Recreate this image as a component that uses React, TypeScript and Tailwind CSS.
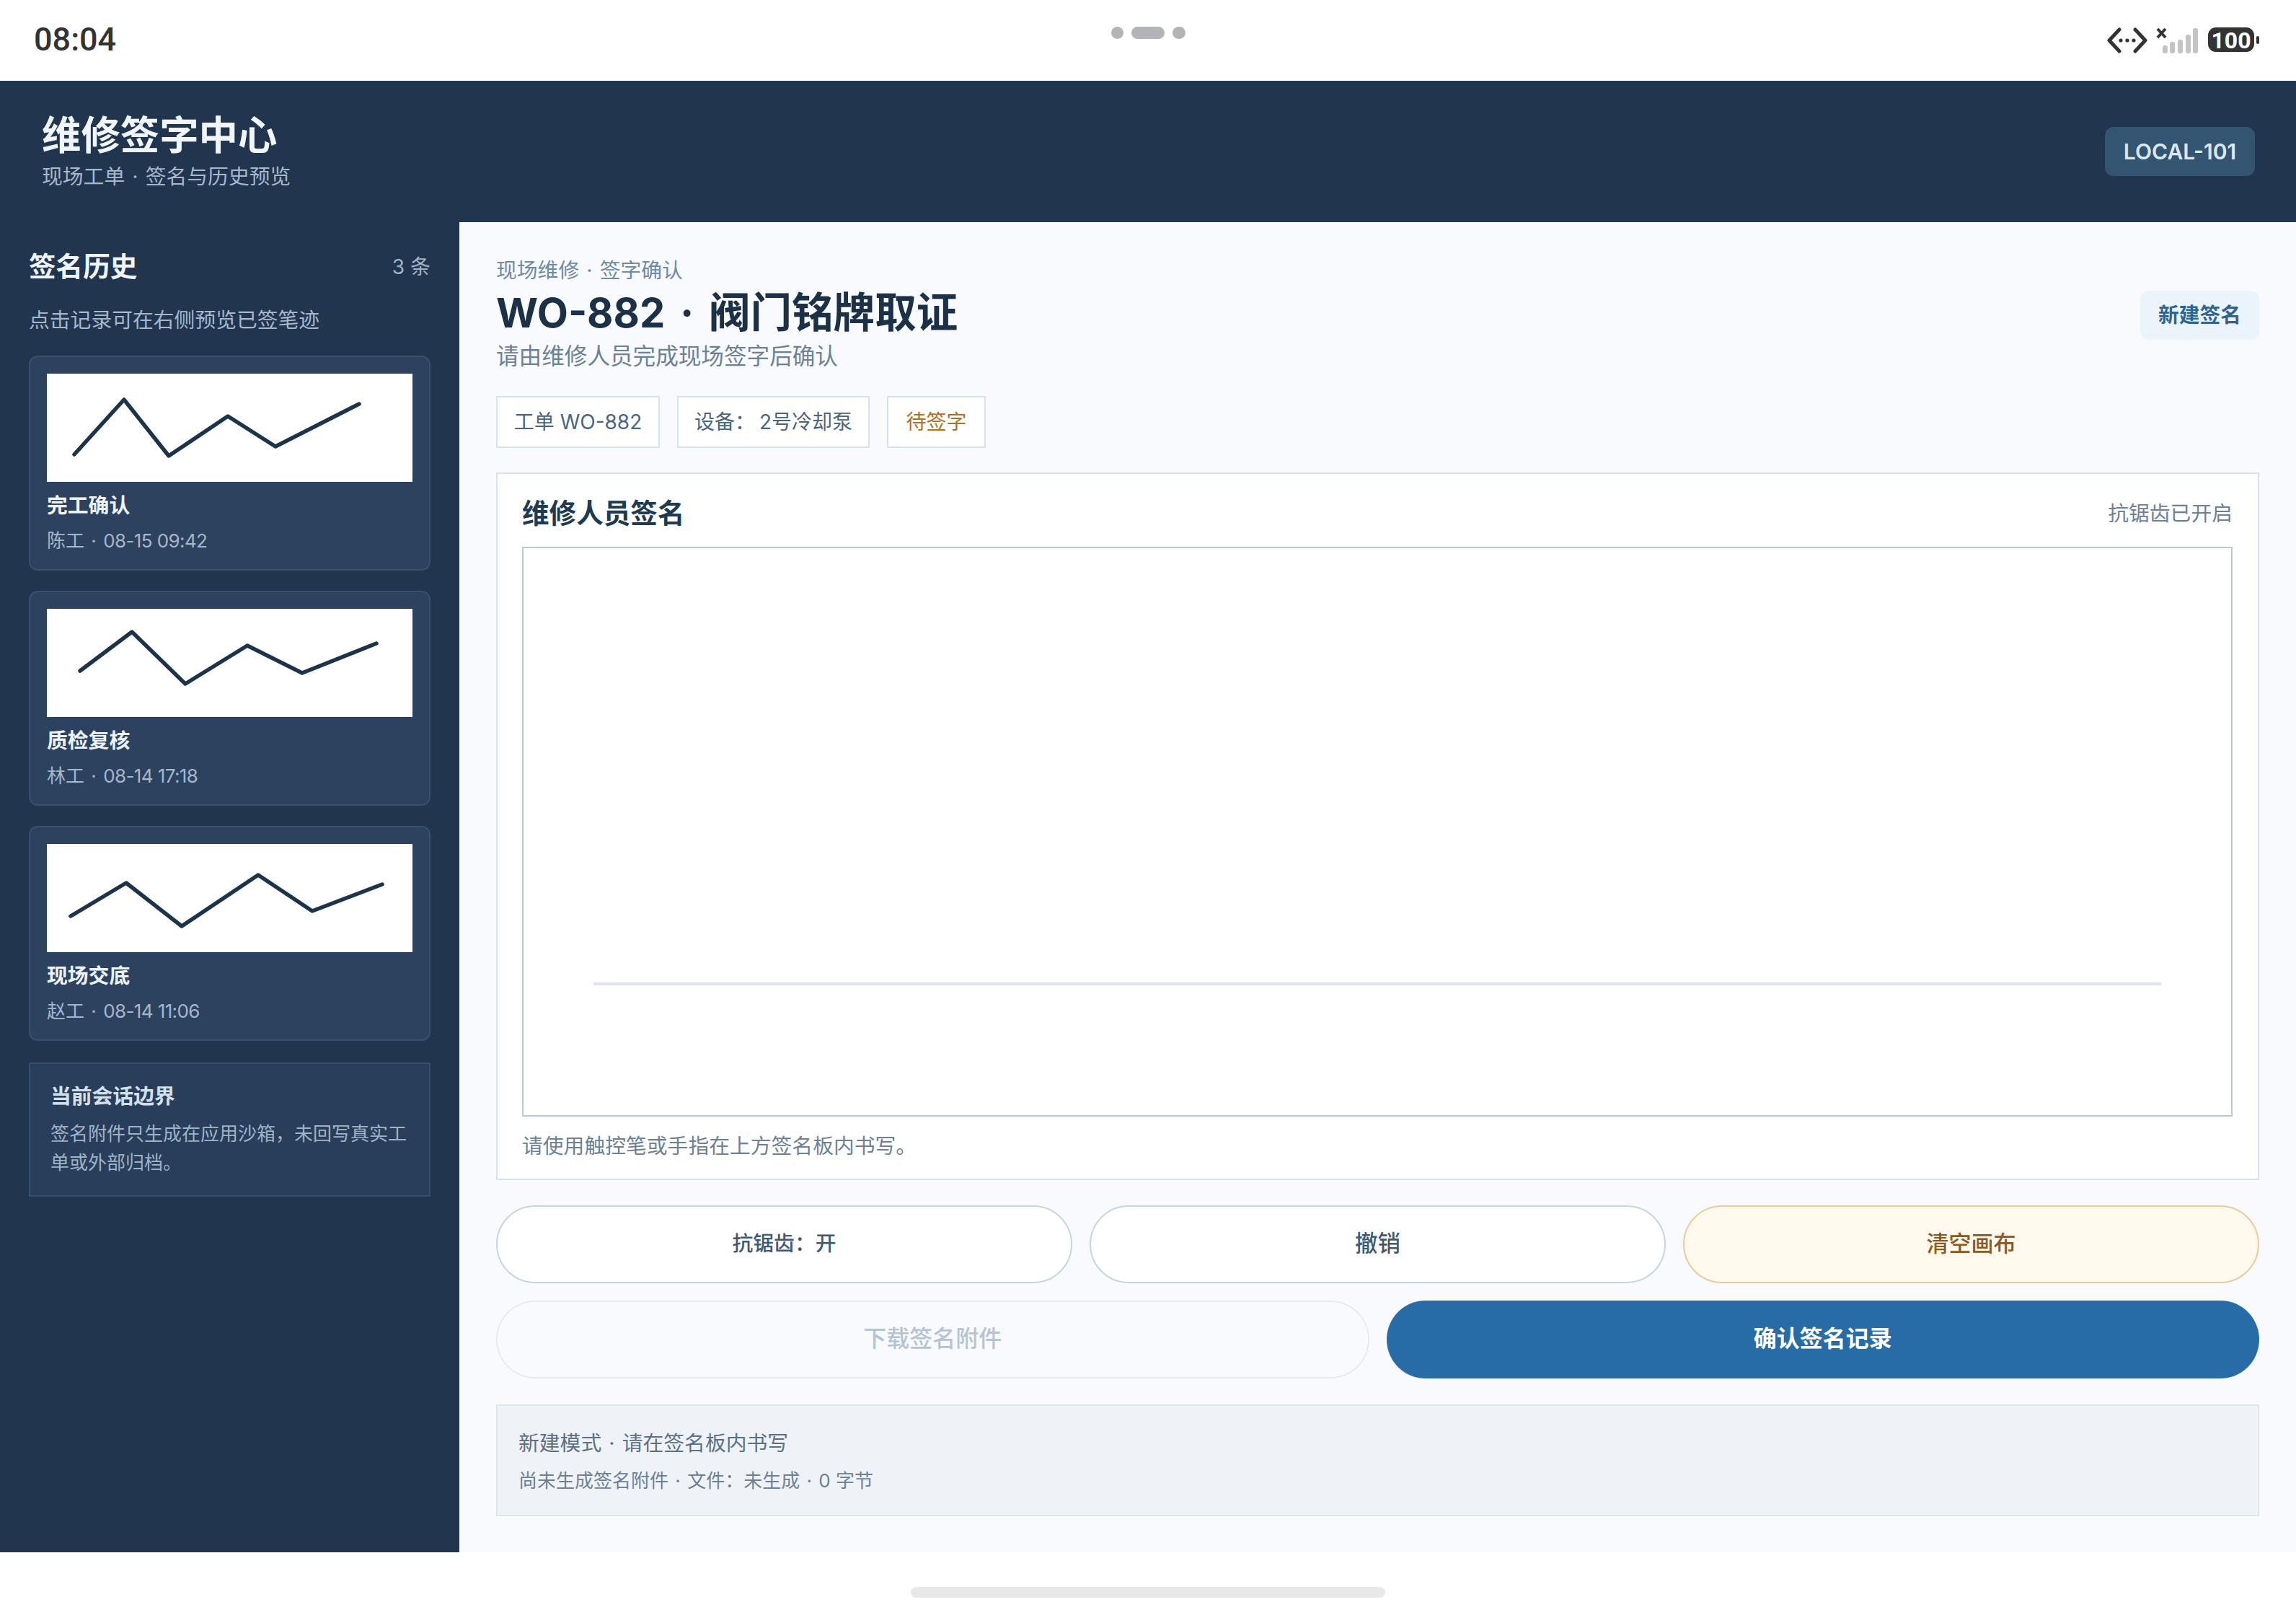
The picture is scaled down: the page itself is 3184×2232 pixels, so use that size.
const fontStack = "font-['Inter','Noto_Sans_CJK_SC',sans-serif]";

const history = [
  {
    id: 1,
    title: "完工确认",
    name: "陈工",
    time: "08-15 09:42",
    points: "38,112 107,36 169,114 251,59 317,101 433,42",
  },
  {
    id: 2,
    title: "质检复核",
    name: "林工",
    time: "08-14 17:18",
    points: "46,86 118,32 192,104 278,51 354,89 457,48",
  },
  {
    id: 3,
    title: "现场交底",
    name: "赵工",
    time: "08-14 11:06",
    points: "33,100 110,54 187,114 293,43 368,93 465,56",
  },
];

function Dot() {
  return <span className="mx-[2px]">·</span>;
}

function StatusBar() {
  return (
    <div className="flex h-[112px] shrink-0 justify-between bg-white pl-[47px] pr-[51px]">
      <div className="w-[404px] pt-[27px] font-['Roboto',sans-serif] text-[45px] leading-[56px] font-medium text-[#333333]">
        08:04
      </div>
      <div className="flex gap-[11px] pt-[37px]">
        <div className="h-[17px] w-[17px] rounded-full bg-[#b3b4b8]" />
        <div className="h-[17px] w-[46px] rounded-full bg-[#b3b4b8]" />
        <div className="h-[17px] w-[18px] rounded-full bg-[#b3b4b8]" />
      </div>
      <div className="flex w-[400px] items-start justify-end pt-[38px]">
        <svg width="56" height="36" viewBox="0 0 56 36" className="mr-[12px]">
          <path
            d="M17 3 3 18l14 15M39 3l14 15-14 15"
            fill="none"
            stroke="#333333"
            strokeWidth="5"
            strokeLinecap="round"
            strokeLinejoin="round"
          />
          <circle cx="19" cy="18" r="2.6" fill="#333333" />
          <circle cx="28" cy="18" r="2.6" fill="#333333" />
          <circle cx="37" cy="18" r="2.6" fill="#333333" />
        </svg>
        <svg width="60" height="36" viewBox="0 0 60 36" className="mr-[12px]">
          <path d="M2 2l11 12M13 2 2 14" stroke="#333333" strokeWidth="4" fill="none" />
          <rect x="9" y="25" width="7" height="11" rx="3" fill="#c4c4c4" />
          <rect x="19" y="20" width="7" height="16" rx="3" fill="#c4c4c4" />
          <rect x="30" y="17" width="7" height="19" rx="3" fill="#c4c4c4" />
          <rect x="41" y="10" width="7" height="26" rx="3" fill="#c4c4c4" />
          <rect x="51" y="1" width="7" height="35" rx="3" fill="#c4c4c4" />
        </svg>
        <div className="flex items-center gap-[3px]">
          <div className="flex h-[34px] w-[64px] items-center justify-center rounded-[11px] bg-[#333333] pt-[1px] font-['Roboto',sans-serif] text-[32px] leading-none font-bold text-white">
            100
          </div>
          <div className="h-[11px] w-[4px] rounded-full bg-[#333333]" />
        </div>
      </div>
    </div>
  );
}

function Header() {
  return (
    <div className="flex h-[196px] shrink-0 items-center justify-between bg-[#21354f] pl-[58px] pr-[57px]">
      <div>
        <div className="text-[54.4px] leading-[64px] font-bold text-[#f0f5fb]">维修签字中心</div>
        <div className="mt-[6px] text-[28.8px] leading-[40px] text-[#a5b8cc]">
          现场工单 <Dot /> 签名与历史预览
        </div>
      </div>
      <div className="flex h-[68px] w-[208px] items-center justify-center rounded-[12px] bg-[#345572] text-[30px] font-semibold text-[#dbe7f5]">
        LOCAL-101
      </div>
    </div>
  );
}

function HistoryCard({ title, name, time, points }: { title: string; name: string; time: string; points: string }) {
  return (
    <div className="rounded-[12px] border-2 border-[#36506e] bg-[#2d425f] px-[23px] pb-[21px] pt-[23px]">
      <div className="h-[150px] bg-white">
        <svg viewBox="0 0 507 150" className="block h-full w-full">
          <polyline
            points={points}
            fill="none"
            stroke="#1d3349"
            strokeWidth="5.5"
            strokeLinecap="round"
            strokeLinejoin="round"
          />
        </svg>
      </div>
      <div className="mt-[13px] text-[28.8px] leading-[40px] font-bold text-[#eef3f9]">{title}</div>
      <div className="mt-[11px] text-[26px] leading-[36px] text-[#a3b7cd]">
        {name} <Dot /> <span className="tracking-[-0.6px]">{time}</span>
      </div>
    </div>
  );
}

function Sidebar() {
  return (
    <div className="w-[637px] shrink-0 bg-[#21354f] px-[40px] pt-[38px]">
      <div className="flex items-center justify-between">
        <div className="text-[37.6px] leading-[48px] font-bold text-[#f0f5fb]">签名历史</div>
        <div className="text-[28px] leading-[48px] text-[#9fb3c8]">3 条</div>
      </div>
      <div className="mt-[30px] text-[28.8px] leading-[40px] text-[#a5b8cc]">点击记录可在右侧预览已签笔迹</div>
      <div className="mt-[29px] flex flex-col gap-[28px]">
        {history.map((item) => (
          <HistoryCard key={item.id} title={item.title} name={item.name} time={item.time} points={item.points} />
        ))}
      </div>
      <div className="mt-[30px] border-2 border-[#34506f] bg-[#283e5b] px-[28px] pb-[25px] pt-[25px]">
        <div className="text-[28.8px] leading-[40px] font-bold text-[#d3e0ee]">当前会话边界</div>
        <div className="mt-[12px] text-[26px] leading-[40px] text-[#9fb3c8]">
          签名附件只生成在应用沙箱，未回写真实工单或外部归档。
        </div>
      </div>
    </div>
  );
}

function Main() {
  return (
    <div className="flex-1 bg-[#f8fafd] pb-[50px] pl-[51px] pr-[51px] pt-[47px]">
      <div className="flex items-start justify-between">
        <div>
          <div className="text-[28.8px] leading-[40px] text-[#6e8aa6]">
            现场维修 <Dot /> 签字确认
          </div>
          <div className="mt-[4px] h-[68px] text-[57.6px] leading-[68px] font-bold text-[#1c3146]">
            <span className="text-[56px]">WO-882</span> <span className="mx-[7px]">·</span> 阀门铭牌取证
          </div>
          <div className="mt-[5px] text-[31.6px] leading-[44px] text-[#6c8197]">请由维修人员完成现场签字后确认</div>
        </div>
        <button className="mt-[48px] flex h-[68px] w-[165px] items-center justify-center rounded-[12px] bg-[#ebf4fb] text-[28.8px] font-bold text-[#2d6592]">
          新建签名
        </button>
      </div>

      <div className="mt-[33px] flex gap-[24px]">
        <div className="flex h-[72px] w-[227px] items-center justify-center border-2 border-[#d6e2ec] bg-white text-[28px] text-[#4a6580]">
          工单 WO-882
        </div>
        <div className="flex h-[72px] w-[267px] items-center justify-center border-2 border-[#d6e2ec] bg-white text-[28px] text-[#4a6580]">
          设备：<span className="ml-[6px]">2号冷却泵</span>
        </div>
        <div className="flex h-[72px] w-[137px] items-center justify-center border-2 border-[#d6e2ec] bg-white text-[28px] text-[#b0701f]">
          待签字
        </div>
      </div>

      <div className="mt-[34px] border-2 border-[#d6e2ec] bg-white pb-[25px] pl-[34px] pr-[35px] pt-[31px]">
        <div className="flex items-center justify-between">
          <div className="text-[37.6px] leading-[48px] font-bold text-[#203a52]">维修人员签名</div>
          <div className="text-[28.8px] leading-[48px] text-[#6c8197]">抗锯齿已开启</div>
        </div>
        <div className="mt-[22px] flex h-[790px] flex-col justify-end border-2 border-[#b9cbdb] bg-white pb-[180px] px-[97px]">
          <div className="h-[4px] bg-[#dfe6ef]" />
        </div>
        <div className="mt-[21px] text-[28.8px] leading-[40px] text-[#6c8197]">请使用触控笔或手指在上方签名板内书写。</div>
      </div>

      <div className="mt-[35px] grid grid-cols-3 gap-[24px]">
        <button className="h-[108px] rounded-[54px] border-2 border-[#c6d5e3] bg-white pb-[2px] text-[28.8px] font-medium text-[#3d5a76]">
          抗锯齿：开
        </button>
        <button className="h-[108px] rounded-[54px] border-2 border-[#c6d5e3] bg-white pb-[2px] text-[31.5px] font-medium text-[#3d5a76]">
          撤销
        </button>
        <button className="h-[108px] rounded-[54px] border-2 border-[#e8cba0] bg-[#fff8ec] pb-[2px] text-[31px] font-medium text-[#8a5a24]">
          清空画布
        </button>
      </div>
      <div className="mt-[24px] grid grid-cols-2 gap-[24px]">
        <button className="h-[108px] rounded-[54px] border-2 border-[#e6ecf2] bg-[#f8fafd] pb-[2px] text-[32px] font-medium text-[#b6c4d2]">
          下载签名附件
        </button>
        <button className="h-[108px] rounded-[54px] bg-[#276ca6] pb-[2px] text-[32px] font-bold text-white">
          确认签名记录
        </button>
      </div>

      <div className="mt-[36px] border-2 border-[#dde5ed] bg-[#eff3f8] pb-[29px] pl-[29px] pr-[29px] pt-[32px]">
        <div className="text-[28.8px] leading-[40px] text-[#5b7086]">
          新建模式 <Dot /> 请在签名板内书写
        </div>
        <div className="mt-[14px] text-[26px] leading-[36px] text-[#6c8197]">
          尚未生成签名附件 <Dot /> 文件：未生成 <Dot /> 0 字节
        </div>
      </div>
    </div>
  );
}

export default function App() {
  return (
    <div className={`flex h-[2232px] w-[3184px] flex-col overflow-hidden bg-white ${fontStack}`}>
      <StatusBar />
      <Header />
      <div className="flex h-[1844px] shrink-0">
        <Sidebar />
        <Main />
      </div>
      <div className="flex flex-1 justify-center pt-[48px]">
        <div className="h-[15px] w-[658px] rounded-full bg-[#e8e8e8]" />
      </div>
    </div>
  );
}
